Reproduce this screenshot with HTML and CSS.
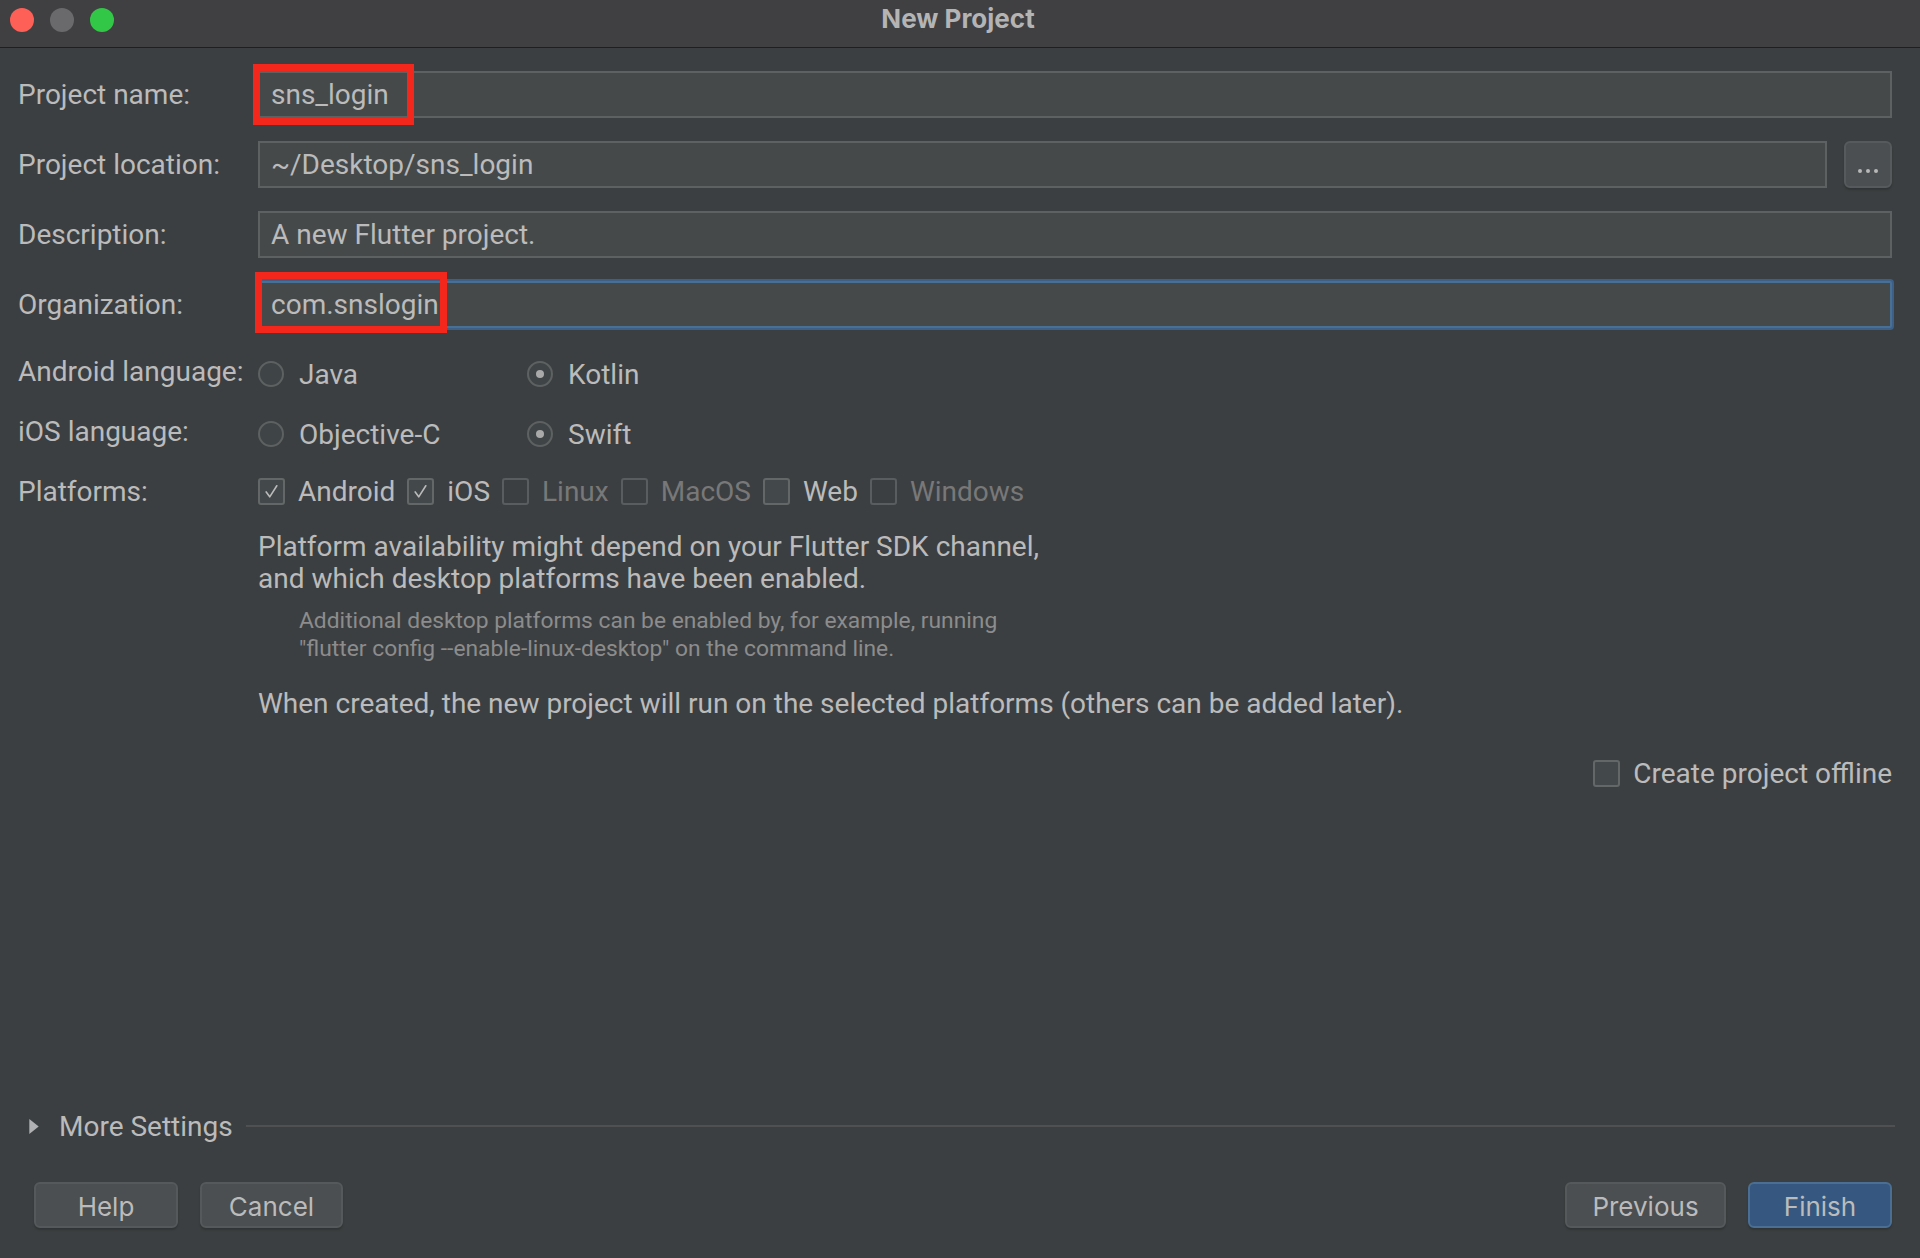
FILE: index.html
```html
<!DOCTYPE html>
<html lang="en">
<head>
<meta charset="utf-8">
<title>New Project</title>
<link rel="stylesheet" href="styles.css">
</head>
<body>
<div class="window">
  <div class="titlebar">
    <div class="lights">
      <span class="light red"></span>
      <span class="light grey"></span>
      <span class="light green"></span>
    </div>
    <div class="title">New Project</div>
    <div class="spacer"></div>
  </div>

  <div class="form">
    <div class="row field-row">
      <div class="label">Project name:</div>
      <div class="field-wrap">
        <div class="field">sns_login</div>
        <div class="highlight hl-name"></div>
      </div>
    </div>

    <div class="row field-row">
      <div class="label">Project location:</div>
      <div class="field-wrap location">
        <div class="field grow">~/Desktop/sns_login</div>
        <div class="browse"><span class="dot"></span><span class="dot"></span><span class="dot"></span></div>
      </div>
    </div>

    <div class="row field-row">
      <div class="label">Description:</div>
      <div class="field-wrap">
        <div class="field">A new Flutter project.</div>
      </div>
    </div>

    <div class="row field-row">
      <div class="label">Organization:</div>
      <div class="field-wrap">
        <div class="field focused">com.snslogin<span class="caret"></span></div>
        <div class="highlight hl-org"></div>
      </div>
    </div>

    <div class="row opt-row r-android">
      <div class="label lift">Android language:</div>
      <div class="options">
        <div class="opt"><span class="radio"></span><span>Java</span></div>
        <div class="opt"><span class="radio on"></span><span>Kotlin</span></div>
      </div>
    </div>

    <div class="row opt-row r-ios">
      <div class="label lift">iOS language:</div>
      <div class="options">
        <div class="opt"><span class="radio"></span><span>Objective-C</span></div>
        <div class="opt"><span class="radio on"></span><span>Swift</span></div>
      </div>
    </div>

    <div class="row opt-row r-platforms">
      <div class="label">Platforms:</div>
      <div class="checks">
        <div class="chk-item"><span class="cb checked"><svg viewBox="0 0 26 26"><path d="M7 13.5 L11 19 L19 6.5" fill="none" stroke="#bbbbbb" stroke-width="1.8" stroke-linecap="round" stroke-linejoin="round"/></svg></span><span>Android</span></div>
        <div class="chk-item"><span class="cb checked"><svg viewBox="0 0 26 26"><path d="M7 13.5 L11 19 L19 6.5" fill="none" stroke="#bbbbbb" stroke-width="1.8" stroke-linecap="round" stroke-linejoin="round"/></svg></span><span>iOS</span></div>
        <div class="chk-item disabled"><span class="cb"></span><span>Linux</span></div>
        <div class="chk-item disabled"><span class="cb"></span><span>MacOS</span></div>
        <div class="chk-item"><span class="cb enabled"></span><span>Web</span></div>
        <div class="chk-item disabled"><span class="cb"></span><span>Windows</span></div>
      </div>
    </div>

    <div class="notes">
      <p class="note">Platform availability might depend on your Flutter SDK channel,<br>and which desktop platforms have been enabled.</p>
      <p class="subnote">Additional desktop platforms can be enabled by, for example, running<br>"flutter config --enable-linux-desktop" on the command line.</p>
      <p class="note when">When created, the new project will run on the selected platforms (others can be added later).</p>
    </div>

    <div class="offline">
      <span class="cb enabled"></span><span>Create project offline</span>
    </div>
  </div>

  <div class="footer">
    <div class="more">
      <svg class="tri" viewBox="0 0 10 16"><path d="M0 0 L10 8 L0 16 Z" fill="#afb1b3"/></svg>
      <span class="more-text">More Settings</span>
      <span class="more-line"></span>
    </div>
    <div class="buttons">
      <div class="btn-group">
        <div class="btn w-help">Help</div>
        <div class="btn w-cancel">Cancel</div>
      </div>
      <div class="btn-group">
        <div class="btn w-prev">Previous</div>
        <div class="btn primary w-finish">Finish</div>
      </div>
    </div>
  </div>
</div>
</body>
</html>
```

FILE: styles.css
```css
html, body {
  margin: 0;
  padding: 0;
  background: #3c3f41;
}

.window {
  width: 1920px;
  height: 1258px;
  display: flex;
  flex-direction: column;
  background: #3c3f41;
  color: #bbbbbb;
  font-family: Roboto, "Liberation Sans", sans-serif;
  font-size: 28px;
  overflow: hidden;
}

/* title bar */
.titlebar {
  height: 47px;
  border-bottom: 1px solid #1f1f1f;
  background: #404042;
  display: grid;
  grid-template-columns: 1fr auto 1fr;
  align-items: center;
}
.lights {
  display: flex;
  gap: 16px;
  padding-left: 10px;
  margin-top: -8px;
}
.light {
  width: 24px;
  height: 24px;
  border-radius: 50%;
}
.red { background: #fe5f57; }
.grey { background: #6a6a6c; }
.green { background: #33c748; }
.title {
  font-family: Inter, "Liberation Sans", sans-serif;
  font-weight: 700;
  font-size: 26px;
  color: #b4b4b4;
  margin-top: -10px;
  margin-left: -4px;
}

/* form */
.form {
  flex: 1;
  padding: 23px 28px 0 18px;
  display: flex;
  flex-direction: column;
}
.row {
  display: grid;
  grid-template-columns: 240px 1fr;
  align-items: center;
}
.field-row {
  height: 47px;
  margin-bottom: 23px;
}
.label {
  white-space: nowrap;
}
.lift {
  position: relative;
  top: -3px;
}
.field-wrap {
  position: relative;
  display: flex;
  height: 47px;
}
.field {
  flex: 1;
  box-sizing: border-box;
  height: 47px;
  background: #45494a;
  border: 2px solid #5e6162;
  padding-left: 11px;
  display: flex;
  align-items: center;
  white-space: nowrap;
}
.field.focused {
  border-color: #4a6f94;
  box-shadow: 0 0 0 2px #3c6087;
  border-radius: 2px;
}
.caret {
  display: inline-block;
  width: 2px;
  height: 30px;
  background: #cfcfcf;
  margin-left: 1px;
}
.browse {
  width: 48px;
  height: 47px;
  margin-left: 17px;
  box-sizing: border-box;
  border: 2px solid #565a5c;
  border-radius: 6px;
  background: #4b4f51;
  box-shadow: 0 2px 2px rgba(0, 0, 0, 0.18);
  display: flex;
  align-items: flex-end;
  justify-content: center;
  gap: 4px;
  padding-bottom: 13px;
}
.dot {
  width: 4px;
  height: 4px;
  border-radius: 50%;
  background: #b8b8b8;
}
.highlight {
  position: absolute;
  box-sizing: border-box;
  border: 7px solid #f4271d;
  pointer-events: none;
}
.hl-name {
  left: -5px;
  top: -7px;
  width: 161px;
  height: 61px;
}
.hl-org {
  left: -3px;
  top: -9px;
  width: 192px;
  height: 61px;
}

/* options */
.opt-row { height: 40px; }
.r-android { margin-top: 3px; }
.r-ios { margin-top: 20px; }
.r-platforms { margin-top: 17px; }
.options {
  display: grid;
  grid-template-columns: 269px auto;
  align-items: center;
}
.opt {
  display: flex;
  align-items: center;
  gap: 15px;
}
.radio {
  width: 26px;
  height: 26px;
  box-sizing: border-box;
  border-radius: 50%;
  border: 2px solid #5e6162;
  background: #3f4446;
  display: flex;
  align-items: center;
  justify-content: center;
}
.radio.on::after {
  content: "";
  width: 8px;
  height: 8px;
  border-radius: 50%;
  background: #a9a9a9;
}
.checks {
  display: flex;
  align-items: center;
  gap: 12px;
}
.chk-item {
  display: flex;
  align-items: center;
  gap: 13px;
}
.chk-item.disabled { color: #787878; }
.cb {
  width: 27px;
  height: 27px;
  box-sizing: border-box;
  border: 2px solid #5a5d5f;
  border-radius: 3px;
  display: flex;
}
.cb svg { width: 100%; height: 100%; }
.cb.checked, .cb.enabled {
  background: #43494a;
  border-color: #646768;
}

/* notes */
.notes {
  padding-left: 240px;
  margin-top: 20px;
}
.notes p { margin: 0; }
.note {
  line-height: 32px;
}
.subnote {
  margin-top: 12px !important;
  padding-left: 41px;
  font-size: 22.8px;
  line-height: 28px;
  color: #8c8c8c;
}
.note.when {
  margin-top: 25px !important;
}
.offline {
  margin-top: 37px;
  align-self: flex-end;
  display: flex;
  align-items: center;
  gap: 13px;
  height: 32px;
}

/* footer */
.footer {
  padding: 0 25px 30px 29px;
}
.more {
  display: flex;
  align-items: center;
  height: 32px;
  margin-top: 2px;
}
.tri {
  width: 10px;
  height: 15px;
}
.more-text {
  margin-left: 20px;
}
.more-line {
  flex: 1;
  height: 2px;
  background: #4f5052;
  margin-left: 13px;
}
.buttons {
  margin-top: 40px;
  display: flex;
  justify-content: space-between;
  padding-left: 5px;
  padding-right: 3px;
}
.btn-group {
  display: flex;
  gap: 22px;
}
.btn {
  height: 46px;
  box-sizing: border-box;
  border: 2px solid #56595b;
  border-radius: 6px;
  background: #4b4f51;
  box-shadow: 0 2px 2px rgba(0, 0, 0, 0.18);
  display: flex;
  align-items: center;
  justify-content: center;
  font-family: Inter, "Liberation Sans", sans-serif;
  font-size: 26px;
  color: #bbbbbb;
  padding-top: 2px;
}
.btn.primary {
  background: #365880;
  border-color: #4a6f92;
}
.w-help { width: 144px; }
.w-cancel { width: 143px; }
.w-prev { width: 161px; }
.w-finish { width: 144px; }
```
